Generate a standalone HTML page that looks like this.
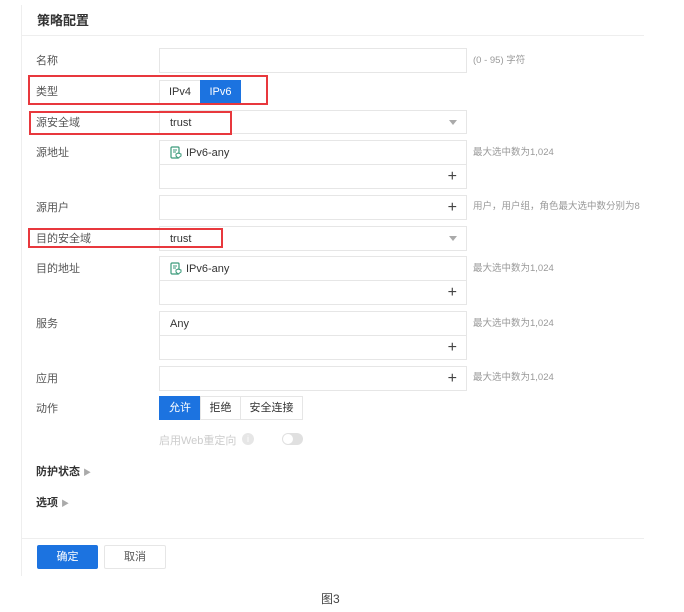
<!DOCTYPE html>
<html><head><meta charset="utf-8"><style>
*{margin:0;padding:0;box-sizing:border-box}
body{width:684px;height:612px;background:#fff;position:relative;font-family:"Liberation Sans","Noto Sans CJK SC",sans-serif;font-size:11px;color:#333;overflow:hidden}
.a{position:absolute}
.panel{left:21px;top:5px;width:623px;height:571px;border-left:1px solid #eee}
.lbl{position:absolute;left:36px;color:#555;font-size:11px;line-height:14px}
.box{position:absolute;left:159px;width:308px;border:1px solid #e6e6e6;background:#fff}
.hint{position:absolute;left:473px;color:#999;font-size:9.5px;line-height:12px}
.plus{position:absolute;right:9px;font-size:16px;color:#444;line-height:16px}
.red{position:absolute;border:2px solid #e8383d}
.tri{position:absolute;right:9px;width:0;height:0;border-left:4px solid transparent;border-right:4px solid transparent;border-top:5px solid #aaa}
.btn{position:absolute;height:24px;line-height:22px;text-align:center;border:1px solid #e6e6e6;font-size:11px;color:#333}
.sel{background:#1c73e0;color:#fff;border-color:#1c73e0}
.t{position:absolute;left:10px;top:6px}
</style></head><body>
<div class="a panel"></div>
<div class="a" style="left:37px;top:10px;font-size:13px;font-weight:bold;color:#333">策略配置</div>
<div class="a" style="left:22px;top:35px;width:622px;height:1px;background:#eee"></div>

<div class="lbl" style="top:54px">名称</div>
<div class="box" style="top:48px;height:25px"></div>
<div class="hint" style="top:55px">(0 - 95) 字符</div>

<div class="lbl" style="top:85px">类型</div>
<div class="btn" style="left:159px;top:80px;width:42px">IPv4</div>
<div class="btn sel" style="left:200px;top:80px;width:41px">IPv6</div>
<div class="red" style="left:28px;top:75px;width:240px;height:30px"></div>

<div class="lbl" style="top:116px">源安全域</div>
<div class="box" style="top:110px;height:24px"><span class="t">trust</span><div class="tri" style="top:9px"></div></div>
<div class="red" style="left:29px;top:111px;width:203px;height:24px"></div>

<div class="lbl" style="top:146px">源地址</div>
<div class="box" style="top:140px;height:49px"><div class="a" style="left:0;top:23px;width:306px;height:1px;background:#e6e6e6"></div>
<svg class="a" style="left:10px;top:5px" width="12" height="13" viewBox="0 0 12 13"><rect x="1" y="1" width="8" height="11" rx="1" fill="none" stroke="#3a9a7a" stroke-width="1.2"/><path d="M3 4h4M3 6h3" stroke="#3a9a7a"/><path d="M8 7l3 1v2l-3 2-2-2V8z" fill="#fff" stroke="#3a9a7a"/></svg>
<span class="a" style="left:26px;top:6px">IPv6-any</span><span class="plus" style="top:28px">+</span></div>
<div class="hint" style="top:147px">最大选中数为1,024</div>

<div class="lbl" style="top:201px">源用户</div>
<div class="box" style="top:195px;height:25px"><span class="plus" style="top:4px">+</span></div>
<div class="hint" style="top:201px">用户，用户组，角色最大选中数分别为8</div>

<div class="lbl" style="top:232px">目的安全域</div>
<div class="box" style="top:226px;height:25px"><span class="t">trust</span><div class="tri" style="top:9px"></div></div>
<div class="red" style="left:28px;top:228px;width:195px;height:20px"></div>

<div class="lbl" style="top:262px">目的地址</div>
<div class="box" style="top:256px;height:49px"><div class="a" style="left:0;top:23px;width:306px;height:1px;background:#e6e6e6"></div>
<svg class="a" style="left:10px;top:5px" width="12" height="13" viewBox="0 0 12 13"><rect x="1" y="1" width="8" height="11" rx="1" fill="none" stroke="#3a9a7a" stroke-width="1.2"/><path d="M3 4h4M3 6h3" stroke="#3a9a7a"/><path d="M8 7l3 1v2l-3 2-2-2V8z" fill="#fff" stroke="#3a9a7a"/></svg>
<span class="a" style="left:26px;top:6px">IPv6-any</span><span class="plus" style="top:28px">+</span></div>
<div class="hint" style="top:263px">最大选中数为1,024</div>

<div class="lbl" style="top:317px">服务</div>
<div class="box" style="top:311px;height:49px"><div class="a" style="left:0;top:23px;width:306px;height:1px;background:#e6e6e6"></div>
<span class="t">Any</span><span class="plus" style="top:28px">+</span></div>
<div class="hint" style="top:318px">最大选中数为1,024</div>

<div class="lbl" style="top:372px">应用</div>
<div class="box" style="top:366px;height:25px"><span class="plus" style="top:4px">+</span></div>
<div class="hint" style="top:372px">最大选中数为1,024</div>

<div class="lbl" style="top:402px">动作</div>
<div class="btn sel" style="left:159px;top:396px;width:42px">允许</div>
<div class="btn" style="left:200px;top:396px;width:41px">拒绝</div>
<div class="btn" style="left:240px;top:396px;width:63px">安全连接</div>

<div class="a" style="left:159px;top:432px;color:#ccc;font-size:11px">启用Web重定向</div>
<div class="a" style="left:242px;top:433px;width:12px;height:12px;border-radius:6px;background:#e6e6e6;color:#fff;font-size:9px;text-align:center;line-height:12px">i</div>
<div class="a" style="left:282px;top:433px;width:21px;height:12px;border-radius:6px;background:#e0e0e0"><div class="a" style="left:1px;top:1px;width:10px;height:10px;border-radius:5px;background:#fff"></div></div>

<div class="a" style="left:36px;top:463px;font-weight:bold;font-size:11px;color:#333">防护状态 <span style="color:#aaa;font-size:8px">▶</span></div>
<div class="a" style="left:36px;top:494px;font-weight:bold;font-size:11px;color:#333">选项 <span style="color:#aaa;font-size:8px">▶</span></div>

<div class="a" style="left:22px;top:538px;width:622px;height:1px;background:#eee"></div>
<div class="btn sel" style="left:37px;top:545px;width:61px;border-radius:2px">确定</div>
<div class="btn" style="left:104px;top:545px;width:62px;border-radius:2px;color:#555">取消</div>

<div class="a" style="left:321px;top:590px;font-size:12px;color:#444">图3</div>
</body></html>
